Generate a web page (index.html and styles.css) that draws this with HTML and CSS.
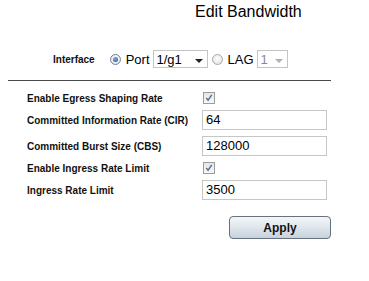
FILE: index.html
```html
<!DOCTYPE html>
<html lang="en">
<head>
    <meta charset="UTF-8">
    <title>Edit Bandwidth</title>
    <link rel="stylesheet" href="styles.css">
</head>
<body>
    <h1 class="title">Edit Bandwidth</h1>

    <div class="interface-row">
        <span class="field-label">Interface</span>
        <span class="radio checked"></span>
        <span class="radio-text">Port</span>
        <span class="select">
            <span class="select-value">1/g1</span>
            <span class="select-arrow"></span>
        </span>
        <span class="radio"></span>
        <span class="radio-text">LAG</span>
        <span class="select disabled">
            <span class="select-value">1</span>
            <span class="select-arrow"></span>
        </span>
    </div>

    <div class="divider"></div>

    <div class="settings">
        <span class="field-label">Enable Egress Shaping Rate</span>
        <span class="checkbox-cell"><span class="checkbox"><svg viewBox="0 0 11 11" width="11" height="11"><path d="M2.5 5.5 L4.5 8 L8.5 2" fill="none" stroke="#5a6f95" stroke-width="1.6"/></svg></span></span>

        <span class="field-label">Committed Information Rate (CIR)</span>
        <span class="text-input">64</span>

        <span class="field-label">Committed Burst Size (CBS)</span>
        <span class="text-input">128000</span>

        <span class="field-label">Enable Ingress Rate Limit</span>
        <span class="checkbox-cell"><span class="checkbox"><svg viewBox="0 0 11 11" width="11" height="11"><path d="M2.5 5.5 L4.5 8 L8.5 2" fill="none" stroke="#5a6f95" stroke-width="1.6"/></svg></span></span>

        <span class="field-label">Ingress Rate Limit</span>
        <span class="text-input">3500</span>
    </div>

    <div class="actions">
        <button class="apply-btn">Apply</button>
    </div>
</body>
</html>
```

FILE: styles.css
```css
* {
    box-sizing: border-box;
}

body {
    margin: 0;
    background: #fff;
    color: #000;
    font-family: "Liberation Sans", Arial, sans-serif;
}

.title {
    margin: 0;
    padding: 2px 0 0 195px;
    font-size: 16px;
    font-weight: normal;
    line-height: 20px;
}

/* Interface selector */
.interface-row {
    display: flex;
    align-items: center;
    height: 18px;
    margin-top: 28px;
    padding-left: 53px;
}

.field-label {
    font-size: 10px;
    font-weight: bold;
    color: #111;
}

.interface-row .field-label {
    margin-right: 15px;
}

.radio {
    width: 11px;
    height: 11px;
    border-radius: 50%;
    border: 1px solid #a8a8a8;
    background: radial-gradient(circle at 50% 40%, #fff, #dcdcdc);
    position: relative;
}

.radio.checked {
    border-color: #6b84a8;
}

.radio.checked::after {
    content: "";
    position: absolute;
    left: 2px;
    top: 2px;
    width: 5px;
    height: 5px;
    border-radius: 50%;
    background: radial-gradient(circle at 40% 35%, #7fb0e8, #1c4f9a);
}

.radio-text {
    font-size: 13px;
    margin: 0 3px 0 5px;
}

.select {
    display: flex;
    align-items: center;
    justify-content: space-between;
    width: 55px;
    height: 18px;
    border: 1px solid #c4c4c4;
    padding: 0 4px 0 3px;
    font-size: 13px;
    margin-right: 4px;
}

.select.disabled {
    width: 31px;
    color: #8a8a8a;
}

.select-arrow {
    width: 0;
    height: 0;
    border-left: 4px solid transparent;
    border-right: 4px solid transparent;
    border-top: 4px solid #222;
    margin-top: 3px;
}

.select.disabled .select-arrow {
    border-top-color: #b0b0b0;
}

.divider {
    margin: 12px 0 0 8px;
    width: 323px;
    height: 1px;
    background: #4a4a4a;
}

/* Settings grid */
.settings {
    display: grid;
    grid-template-columns: 175px 125px;
    align-items: center;
    row-gap: 6px;
    padding: 11px 0 0 27px;
}

.checkbox-cell {
    display: flex;
    height: 12px;
    align-items: center;
    padding-left: 1px;
}

.checkbox {
    width: 12px;
    height: 12px;
    border: 1px solid #9c9c9c;
    background: linear-gradient(#e6e6e6, #f8f8f8);
    display: flex;
    align-items: center;
    justify-content: center;
}

.checkbox svg {
    width: 10px;
    height: 10px;
}

.text-input {
    height: 20px;
    border: 1px solid #c6c6c6;
    font-size: 13px;
    line-height: 18px;
    padding-left: 3px;
}

/* Apply button */
.actions {
    padding: 16px 0 0 229px;
}

.apply-btn {
    width: 102px;
    height: 23px;
    border: 1px solid #66727f;
    border-radius: 4px;
    background: linear-gradient(#f3f6f8, #dfe6ec 50%, #c7d2dc);
    font-family: "Liberation Sans", Arial, sans-serif;
    font-size: 12px;
    font-weight: bold;
    color: #111;
    padding: 0;
}
```
